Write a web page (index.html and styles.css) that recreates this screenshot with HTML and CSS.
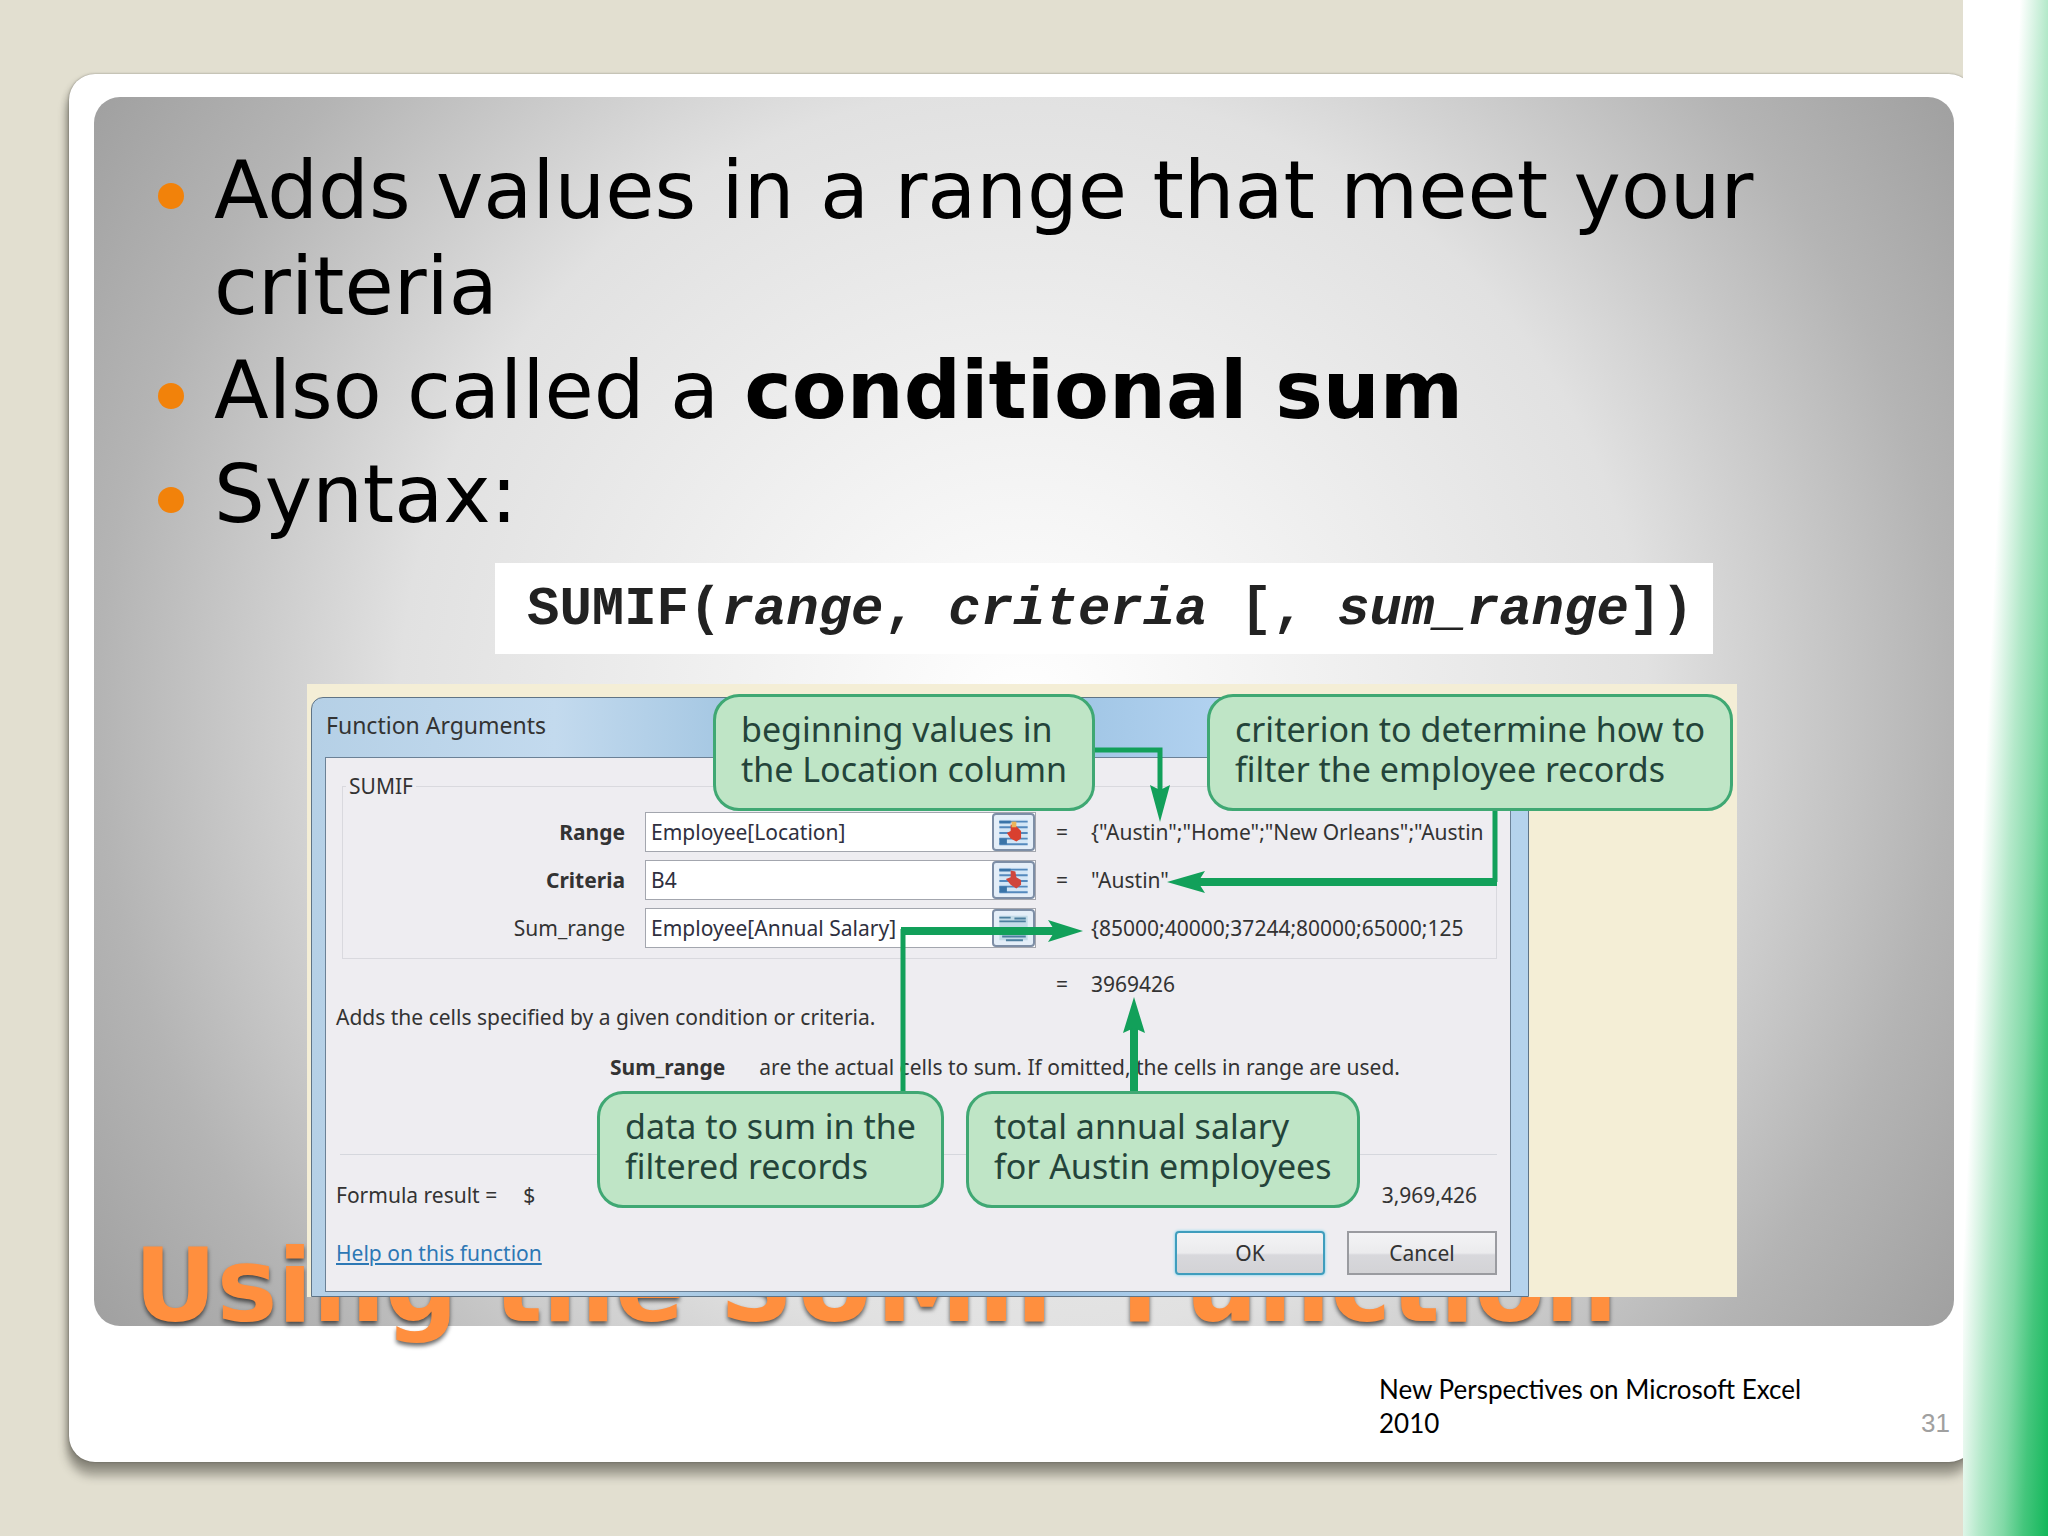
FILE: index.html
```html
<!DOCTYPE html>
<html lang="en">

<head>
    <meta charset="UTF-8">
    <meta name="viewport" content="width=device-width, initial-scale=1.0">
    <title>Using the SUMIF Function</title>
    <link rel="stylesheet" href="styles.css">
</head>

<body>
    <div class="slide">
        <main class="card">
            <section class="panel">
                <h1>Using the SUMIF Function</h1>
                <ul class="points">
                    <li>Adds values in a range that meet your criteria</li>
                    <li>Also called a <b>conditional sum</b></li>
                    <li>Syntax:</li>
                </ul>
                <p class="syntax">SUMIF(<i>range</i>, <i>criteria</i> [, <i>sum_range</i>])</p>

                <div class="figure">
                    <form class="dialog">
                        <h2>Function Arguments</h2>
                        <div class="client">
                            <fieldset>
                                <legend>SUMIF</legend>
                                <div class="args">
                                    <label class="strong" for="range">Range</label>
                                    <div class="field">
                                        <input type="text" id="range" value="Employee[Location]">
                                        <button type="button" class="pick" aria-label="Select range">
                                            <svg viewBox="0 0 40 36">
                                                <rect x="5" y="5" width="30" height="26" fill="#d3e6f6" />
                                                <path d="M5 7h30M5 13h30M5 19h30M5 25h30M5 31h30" stroke="#5489bd" stroke-width="2" />
                                                <path d="M5 6h12v3H5zM5 25h8v6H5z" fill="#3a74a8" />
                                                <path d="M17 10l6 2 5 5v8l-5 3-6-3-4-6 4-2z" fill="#d9402f" />
                                                <path d="M18 7h5v6h-5z" fill="#edb55a" />
                                            </svg>
                                        </button>
                                    </div>
                                    <span>=</span>
                                    <output>{"Austin";"Home";"New Orleans";"Austin</output>

                                    <label class="strong" for="criteria">Criteria</label>
                                    <div class="field">
                                        <input type="text" id="criteria" value="B4">
                                        <button type="button" class="pick" aria-label="Select criteria">
                                            <svg viewBox="0 0 40 36">
                                                <rect x="5" y="5" width="30" height="26" fill="#d3e6f6" />
                                                <path d="M5 7h30M5 13h30M5 19h30M5 25h30M5 31h30" stroke="#5489bd" stroke-width="2" />
                                                <path d="M5 6h12v3H5zM5 25h8v6H5z" fill="#3a74a8" />
                                                <path d="M17 8l5 1 1 6 5 3v5l-5 4-6-4-5-6 5-2z" fill="#d0463c" />
                                            </svg>
                                        </button>
                                    </div>
                                    <span>=</span>
                                    <output>"Austin"</output>

                                    <label for="sum-range">Sum_range</label>
                                    <div class="field">
                                        <input type="text" id="sum-range" value="Employee[Annual Salary]">
                                        <button type="button" class="pick" aria-label="Select sum range">
                                            <svg viewBox="0 0 40 36">
                                                <rect x="5" y="5" width="30" height="26" fill="#c3dbe8" />
                                                <path d="M5 7h12M21 8h12M5 11h28M8 27h25M12 31h18" stroke="#4c7f9e" stroke-width="2" />
                                            </svg>
                                        </button>
                                    </div>
                                    <span></span>
                                    <output>{85000;40000;37244;80000;65000;125</output>
                                </div>
                            </fieldset>
                            <p class="total"><span>=</span><output>3969426</output></p>
                            <p class="about">Adds the cells specified by a given condition or criteria.</p>
                            <p class="hint"><b>Sum_range</b><span>are the actual cells to sum. If omitted, the cells in range are used.</span></p>
                            <hr>
                            <p class="result"><span>Formula result =</span><span>$</span><output>3,969,426</output></p>
                            <div class="actions">
                                <a href="#">Help on this function</a>
                                <button type="button" class="ok">OK</button>
                                <button type="button">Cancel</button>
                            </div>
                        </div>
                    </form>

                    <!-- connectors from the callouts to the dialog values -->
                    <svg class="arrows" viewBox="0 0 1431 613">
                        <g fill="none" stroke="#12a05a">
                            <path d="M786 66H853V110" stroke-width="5" />
                            <path d="M1188 125V198" stroke-width="5" />
                            <path d="M1190 198H890" stroke-width="8" />
                            <path d="M596 409V245" stroke-width="5" />
                            <path d="M594 247H750" stroke-width="8" />
                            <path d="M827 409V340" stroke-width="8" />
                        </g>
                        <g fill="#12a05a">
                            <path d="M853 138L843 101L853 106L863 101Z" />
                            <path d="M860 198L898 187L891 198L898 209Z" />
                            <path d="M776 247L741 236L748 247L741 258Z" />
                            <path d="M827 313L816 349L827 344L838 349Z" />
                        </g>
                    </svg>
                    <p class="callout range-note">beginning values in<br>the Location column</p>
                    <p class="callout criteria-note">criterion to determine how to<br>filter the employee records</p>
                    <p class="callout sum-note">data to sum in the<br>filtered records</p>
                    <p class="callout total-note">total annual salary<br>for Austin employees</p>
                </div>
            </section>
            <footer>
                <p>New Perspectives on Microsoft Excel 2010</p>
                <span class="page">31</span>
            </footer>
        </main>
        <div class="strip"></div>
    </div>
</body>

</html>
```

FILE: styles.css
```css
* {
    margin: 0;
    padding: 0;
    box-sizing: border-box;
}

body {
    background-color: #e2dfd0;
    font-family: "DejaVu Sans", Verdana, sans-serif;
    color: black;
}

.slide {
    display: flex;
    min-height: 100vh;
}

.card {
    flex: 1;
    display: flex;
    flex-direction: column;
    margin: 74px -12px 74px 69px;
    padding: 23px 21px 0 25px;
    background-color: white;
    border-radius: 26px;
    box-shadow: -2px 14px 10px rgba(60, 58, 50, 0.4), -2px 4px 6px rgba(60, 58, 50, 0.3), 0 0 2px rgba(60, 58, 50, 0.5);
}

.strip {
    position: relative;
    width: 85px;
    background: linear-gradient(92.6deg, white 37%, #b4e9ca 55%, #80d9a6 71%, #44c67c 84%, #12b75a 100%);
}

.panel {
    position: relative;
    padding: 46px 26px 29px 46px;
    border-radius: 26px;
    background: radial-gradient(circle farthest-corner, #fff 0%, #e1e1e1 56%, #b4b4b4 83%, #a0a0a0 100%);
}

/* the title sits under the figure */
h1 {
    position: absolute;
    left: 40px;
    bottom: -18px;
    font-size: 102px;
    line-height: 116px;
    white-space: nowrap;
    color: #ff8f3e;
    text-shadow: 0 3px 4px rgba(0, 0, 0, 0.6);
}

.points {
    display: flex;
    flex-direction: column;
    gap: 8px;
    list-style: none;
    font-size: 80px;
    line-height: 96px;
}

.points li {
    position: relative;
    padding-left: 74px;
}

.points li::before {
    content: "";
    position: absolute;
    left: 18px;
    top: 40px;
    width: 26px;
    height: 26px;
    border-radius: 50%;
    background-color: #f2820a;
}

.syntax {
    width: fit-content;
    margin: 20px 0 30px 355px;
    padding: 3px 19px 0 32px;
    background-color: white;
    color: #222;
    font-family: "Liberation Mono", monospace;
    font-size: 54px;
    font-weight: bold;
    line-height: 88px;
}

.figure {
    position: relative;
    max-width: 1430px;
    margin-left: 167px;
    padding: 13px 208px 0 4px;
    background-color: #f4eed6;
    font-family: "Noto Sans", sans-serif;
    font-size: 21px;
    line-height: 28px;
    color: #333;
}

.dialog {
    padding: 0 17px 4px 13px;
    border: 1px solid #5f7486;
    border-radius: 12px 12px 0 0;
    background: linear-gradient(90deg, #b5d0e6 0, #c3daee 20%, #a3c6e2 35%, #8fb9da 50%, #b2d2f0 75%, #b5d3ec 100%);
}

.dialog h2 {
    padding: 11px 1px 16px;
    font-size: 23px;
    font-weight: normal;
    line-height: 32px;
}

.client {
    padding: 14px 13px 16px 10px;
    border: 1px solid #6b8196;
    background-color: #eeedf1;
}

fieldset {
    margin-left: 6px;
    padding: 12px 0 10px;
    border: 1px solid #d9d9de;
}

legend {
    margin-left: 3px;
    padding: 0 3px;
}

.args {
    display: grid;
    grid-template-columns: 282px 391px 15px 1fr;
    column-gap: 20px;
    row-gap: 8px;
    align-items: center;
    white-space: nowrap;
}

.args label {
    text-align: right;
}

.strong {
    font-weight: bold;
}

.field {
    display: flex;
    height: 40px;
    border: 1px solid #a3a6ae;
    background-color: white;
}

.field input {
    flex: 1;
    min-width: 0;
    padding-left: 5px;
    border: none;
    background: none;
    font: inherit;
    color: #2f3040;
}

.pick {
    width: 43px;
    border: 2px solid #7d8ea6;
    border-radius: 4px;
    background-color: #e4eef8;
}

.pick svg {
    display: block;
    width: 100%;
    height: 100%;
}

.total {
    display: flex;
    gap: 20px;
    margin: 11px 0 5px 720px;
}

.total span {
    width: 15px;
}

.hint {
    display: flex;
    gap: 34px;
    margin: 22px 0 73px 274px;
    white-space: nowrap;
}

hr {
    margin: 0 0 26px 4px;
    border: none;
    border-top: 1px solid #d5d7dd;
}

.result {
    display: flex;
    gap: 26px;
    margin-bottom: 22px;
}

.result output {
    margin-left: auto;
    padding-right: 20px;
}

.actions {
    display: flex;
    align-items: center;
    gap: 22px;
}

.actions a {
    margin-right: auto;
    color: #2d78b5;
}

.actions button {
    width: 150px;
    height: 44px;
    border: 2px solid #9a9ba0;
    background: linear-gradient(#f3f3f5 0, #ebebed 50%, #d8d8dc 55%, #d3d3d6 100%);
    font: inherit;
    color: #333;
}

.actions .ok {
    border-color: #3f9dbd;
    border-radius: 4px;
    box-shadow: 0 0 3px #5fd0ee;
}

.arrows {
    position: absolute;
    left: 0;
    top: 0;
    width: 1431px;
    height: 613px;
}

.callout {
    position: absolute;
    padding: 12px 25px 19px;
    border: 3px solid #3fa873;
    border-radius: 26px;
    background-color: #bfe5c6;
    font-size: 34px;
    line-height: 40px;
    white-space: nowrap;
    color: #24443a;
}

.range-note {
    left: 406px;
    top: 10px;
}

.criteria-note {
    left: 900px;
    top: 10px;
}

.sum-note {
    left: 290px;
    top: 407px;
}

.total-note {
    left: 659px;
    top: 407px;
}

footer {
    display: flex;
    justify-content: flex-end;
    align-items: flex-end;
    padding-top: 46px;
    font-family: Lato, sans-serif;
    font-size: 26px;
    line-height: 34px;
}

footer p {
    width: 450px;
}

.page {
    width: 125px;
    padding-right: 4px;
    text-align: right;
    font-family: "Liberation Sans", sans-serif;
    font-size: 26px;
    color: #a0a0a0;
}
```
